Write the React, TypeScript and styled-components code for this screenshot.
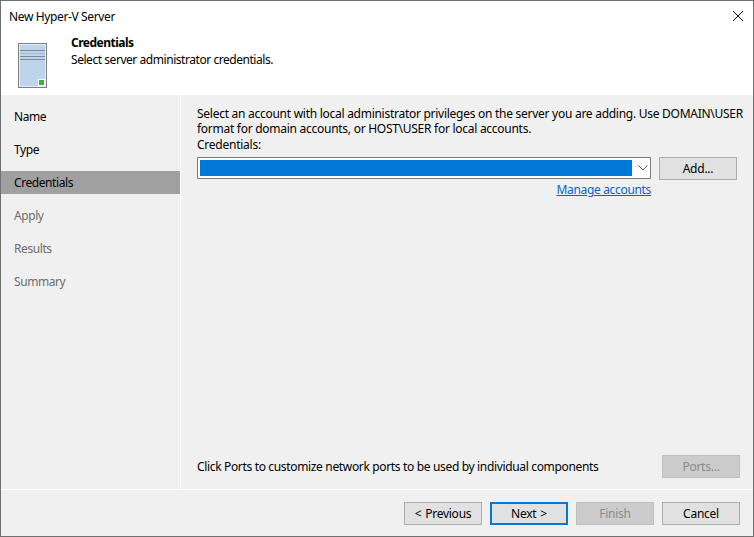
import React from "react";
import styled, { createGlobalStyle } from "styled-components";

const GlobalStyle = createGlobalStyle`
  html, body {
    margin: 0;
    padding: 0;
    background: #fff;
  }
  body {
    font-family: "Noto Sans", "Open Sans", "Liberation Sans", sans-serif;
    font-size: 12px;
    color: #000;
  }
`;

const Window = styled.div`
  width: 754px;
  height: 537px;
  box-sizing: border-box;
  border: 1px solid #6f6f6f;
  display: flex;
  flex-direction: column;
  background: #f0f0f0;
  overflow: hidden;
`;

const TitleBar = styled.div`
  height: 30px;
  flex: none;
  background: #fff;
  display: flex;
  align-items: center;
  justify-content: space-between;
  padding: 0 10px 0 8px;
  font-size: 12px;
  letter-spacing: -0.37px;
`;

const Header = styled.div`
  height: 64px;
  flex: none;
  background: #fff;
  display: flex;
  padding-left: 17px;
  gap: 23px;
`;

const ServerIcon = styled.svg`
  width: 30px;
  height: 46px;
  margin-top: 12px;
  flex: none;
`;

const HeaderText = styled.div`
  display: flex;
  flex-direction: column;
  padding-top: 3px;
  letter-spacing: -0.45px;
  line-height: 17px;
`;

const HeaderTitle = styled.div`
  font-weight: 700;
  letter-spacing: -0.5px;
`;

const Body = styled.div`
  flex: 1;
  display: flex;
  min-height: 0;
`;

const Sidebar = styled.div`
  width: 179px;
  flex: none;
  padding-top: 10px;
  border-right: 1px solid #fff;
  display: flex;
  flex-direction: column;
  gap: 10px;
`;

const Step = styled.div<{ $active?: boolean; $disabled?: boolean }>`
  height: 23px;
  line-height: 24px;
  padding-left: 13px;
  letter-spacing: -0.42px;
  background: ${(p) => (p.$active ? "#a0a0a0" : "transparent")};
  color: ${(p) => (p.$disabled ? "#6d6d6d" : "#000")};
`;

const Content = styled.div`
  flex: 1;
  min-width: 0;
  display: flex;
  flex-direction: column;
  padding: 11px 13px 11px 16px;
`;

const Description = styled.div`
  line-height: 15px;
  letter-spacing: -0.27px;
  white-space: nowrap;
`;

const FieldLabel = styled.div`
  line-height: 16px;
  margin-top: 1px;
  letter-spacing: -0.25px;
`;

const FieldRow = styled.div`
  display: flex;
  gap: 8px;
  margin-top: 4px;
  margin-right: 3px;
`;

const Combo = styled.div`
  width: 454px;
  height: 22px;
  box-sizing: border-box;
  border: 1px solid #7a7a7a;
  background: #fff;
  display: flex;
  align-items: stretch;
  padding: 2px;
`;

const ComboValue = styled.div`
  width: 433px;
  background: #0078d7;
`;

const ComboArrow = styled.svg`
  width: 10px;
  height: 6px;
  margin: 5px 0 0 6px;
`;

const Button = styled.button<{ $primary?: boolean }>`
  width: 78px;
  height: 23px;
  box-sizing: border-box;
  padding: 0;
  background: #e1e1e1;
  border: ${(p) => (p.$primary ? "2px solid #0078d7" : "1px solid #adadad")};
  font: inherit;
  letter-spacing: -0.25px;
  word-spacing: 1px;
  color: #000;

  &:disabled {
    background: #cccccc;
    border-color: #bfbfbf;
    color: #8a8a8a;
  }
`;

const ManageRow = styled.div`
  width: 454px;
  display: flex;
  justify-content: flex-end;
  margin-top: 2px;
`;

const ManageLink = styled.a`
  color: #0066cc;
  text-decoration: underline;
  line-height: 16px;
  letter-spacing: -0.33px;
`;

const Spacer = styled.div`
  flex: 1;
`;

const PortsRow = styled.div`
  display: flex;
  align-items: center;
  justify-content: space-between;
  letter-spacing: -0.34px;
`;

const Footer = styled.div`
  height: 47px;
  flex: none;
  box-sizing: border-box;
  border-top: 1px solid #fff;
  display: flex;
  justify-content: flex-end;
  gap: 8px;
  padding: 12px 13px 0 0;
`;

const steps = [
  { name: "Name" },
  { name: "Type" },
  { name: "Credentials", active: true },
  { name: "Apply", disabled: true },
  { name: "Results", disabled: true },
  { name: "Summary", disabled: true },
];

export default function App() {
  return (
    <>
      <GlobalStyle />
      <Window>
        <TitleBar>
          <span>New Hyper-V Server</span>
          <svg width="10" height="10" viewBox="0 0 10 10">
            <path d="M0 0L10 10M10 0L0 10" stroke="#111" strokeWidth="1" fill="none" />
          </svg>
        </TitleBar>
        <Header>
          <ServerIcon viewBox="0 0 30 46">
            <rect x="0.5" y="0.5" width="28" height="44" fill="#bcd4ec" stroke="#7f7f7f" />
            <rect x="1.5" y="1.5" width="26" height="42" fill="none" stroke="#e4edf6" />
            <path d="M2 7.5H27M2 13.5H27M2 16.5H27" stroke="#7f8a96" fill="none" />
            <path d="M2 10.5H27" stroke="#a9b6c4" fill="none" />
            <rect x="20" y="36" width="7" height="7" fill="#fff" />
            <rect x="21" y="37" width="5" height="5" fill="#3fae3f" />
          </ServerIcon>
          <HeaderText>
            <HeaderTitle>Credentials</HeaderTitle>
            <div>Select server administrator credentials.</div>
          </HeaderText>
        </Header>
        <Body>
          <Sidebar>
            {steps.map((s) => (
              <Step key={s.name} $active={s.active} $disabled={s.disabled}>
                {s.name}
              </Step>
            ))}
          </Sidebar>
          <Content>
            <Description>
              Select an account with local administrator privileges on the server you are adding. Use DOMAIN\USER
              <br />
              format for domain accounts, or HOST\USER for local accounts.
            </Description>
            <FieldLabel>Credentials:</FieldLabel>
            <FieldRow>
              <Combo>
                <ComboValue />
                <ComboArrow viewBox="0 0 10 6">
                  <path d="M0.5 0.5L5 5L9.5 0.5" stroke="#555" fill="none" />
                </ComboArrow>
              </Combo>
              <Button>Add...</Button>
            </FieldRow>
            <ManageRow>
              <ManageLink href="#">Manage accounts</ManageLink>
            </ManageRow>
            <Spacer />
            <PortsRow>
              <span>Click Ports to customize network ports to be used by individual components</span>
              <Button disabled>Ports...</Button>
            </PortsRow>
          </Content>
        </Body>
        <Footer>
          <Button>&lt; Previous</Button>
          <Button $primary>Next &gt;</Button>
          <Button disabled>Finish</Button>
          <Button>Cancel</Button>
        </Footer>
      </Window>
    </>
  );
}
